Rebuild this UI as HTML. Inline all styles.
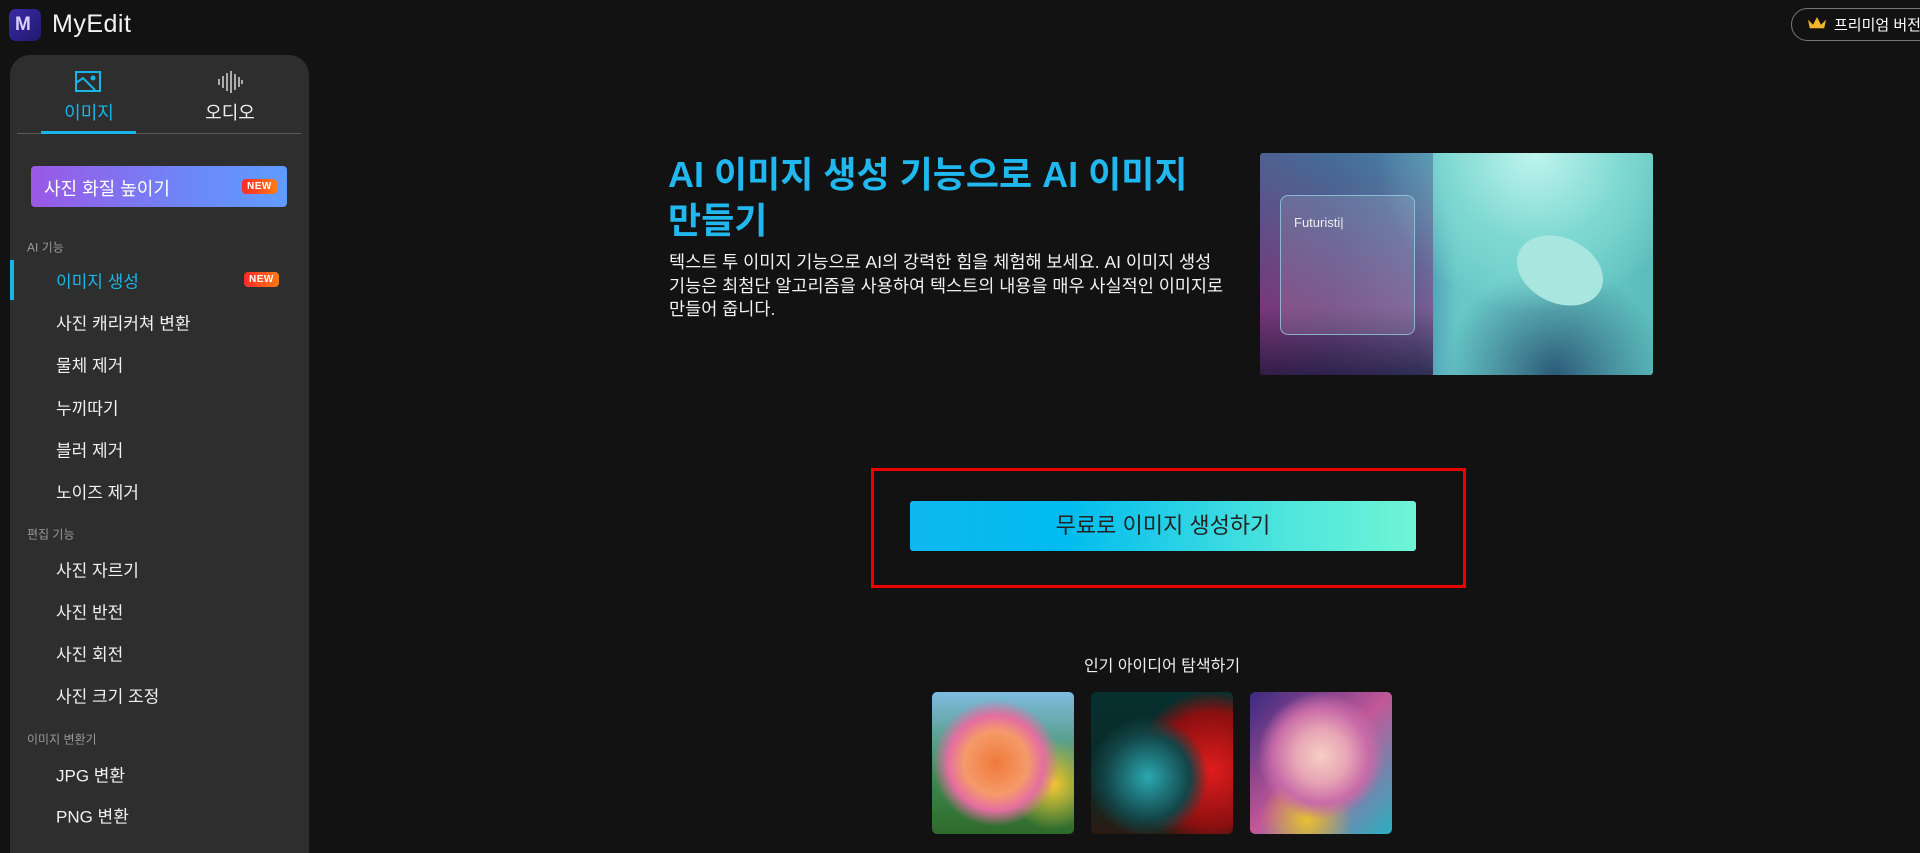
<!DOCTYPE html>
<html style="overflow:hidden;height:853px"><head><meta charset="utf-8"><style>
*{margin:0;padding:0;box-sizing:border-box}
body{width:1920px;height:853px;overflow:hidden;background:#121212;font-family:"Liberation Sans","Noto Sans CJK KR",sans-serif;color:#fff;position:relative}
.a{position:absolute}
.side{left:10px;top:55px;width:299px;height:798px;background:#2e2e2e;border-radius:20px 20px 0 0}
.mi{position:absolute;left:56px;font-size:17px;color:#f0f0f0;transform:translateY(-50%);white-space:nowrap}
.sec{position:absolute;left:27px;font-size:12px;color:#9a9a9a;transform:translateY(-50%)}
.new{position:absolute;background:linear-gradient(90deg,#ff2a2a,#ff7a14);color:#fff;font-size:10px;font-weight:bold;border-radius:4px;padding:2px 5px;letter-spacing:.5px}
.th{position:absolute;top:692px;width:142px;height:142px;border-radius:5px;overflow:hidden}
</style></head><body>
<div class="a" style="left:9px;top:9px;width:32px;height:32px;border-radius:7px;background:linear-gradient(135deg,#3b2aa8,#22186e)"></div>
<div class="a" style="left:15px;top:14px;font-size:19px;font-weight:bold;color:#d8d0ff">M</div>
<div class="a" style="left:52px;top:10px;font-size:25px;color:#f2f2f2;letter-spacing:.5px">MyEdit</div>
<div class="a" style="left:1791px;top:8px;width:160px;height:33px;border:1px solid #777;border-radius:17px"></div>
<div class="a" style="left:1808px;top:17px;width:18px;height:14px;background:#f5b52e;clip-path:polygon(0 20%,28% 55%,50% 0,72% 55%,100% 20%,90% 80%,10% 80%)"></div>
<div class="a" style="left:1834px;top:14px;font-size:15px;color:#fff;white-space:nowrap">프리미엄 버전</div>

<div class="a side"></div>
<svg class="a" style="left:75px;top:71px" width="26" height="21" viewBox="0 0 26 21"><rect x="1" y="1" width="24" height="19" fill="none" stroke="#19b5e6" stroke-width="2"/><circle cx="18" cy="7" r="2.5" fill="#19b5e6"/><path d="M1 12 L8 7 L20 19" fill="none" stroke="#19b5e6" stroke-width="2"/></svg>
<div class="a" style="left:45px;top:99px;width:88px;text-align:center;font-size:18px;color:#19b5e6">이미지</div>
<svg class="a" style="left:217px;top:71px" width="26" height="22" viewBox="0 0 26 22"><g stroke="#ccc" stroke-width="1.6"><path d="M2 8v6M6 5v12M10 2v18M14 0v22M18 3v16M22 6v10M25 9v4"/></g></svg>
<div class="a" style="left:185px;top:99px;width:90px;text-align:center;font-size:18px;color:#f0f0f0">오디오</div>
<div class="a" style="left:17px;top:133px;width:284px;height:1px;background:#5a5a5a"></div>
<div class="a" style="left:41px;top:131px;width:95px;height:3px;background:#19b5e6"></div>
<div class="a" style="left:31px;top:166px;width:256px;height:41px;border-radius:4px;background:linear-gradient(90deg,#9b58e6,#6e86f8 60%,#5f9cff)"></div>
<div class="a" style="left:44px;top:175px;font-size:18px;color:#fff">사진 화질 높이기</div>
<div class="new" style="left:242px;top:179px">NEW</div>
<div class="sec" style="top:247px">AI 기능</div>
<div class="a" style="left:10px;top:260px;width:4px;height:40px;background:#19b5e6"></div>
<div class="mi" style="top:280px;color:#19b5e6">이미지 생성</div>
<div class="new" style="left:244px;top:272px">NEW</div>
<div class="mi" style="top:322px">사진 캐리커쳐 변환</div>
<div class="mi" style="top:364px">물체 제거</div>
<div class="mi" style="top:407px">누끼따기</div>
<div class="mi" style="top:449px">블러 제거</div>
<div class="mi" style="top:491px">노이즈 제거</div>
<div class="sec" style="top:534px">편집 기능</div>
<div class="mi" style="top:569px">사진 자르기</div>
<div class="mi" style="top:611px">사진 반전</div>
<div class="mi" style="top:653px">사진 회전</div>
<div class="mi" style="top:695px">사진 크기 조정</div>
<div class="sec" style="top:739px">이미지 변환기</div>
<div class="mi" style="top:774px">JPG 변환</div>
<div class="mi" style="top:815px">PNG 변환</div>

<div class="a" style="left:668px;top:152px;width:560px;font-size:36px;font-weight:bold;line-height:46px;color:#20b8ef">AI 이미지 생성 기능으로 AI 이미지 만들기</div>
<div class="a" style="left:669px;top:251px;width:560px;font-size:17.5px;line-height:23.5px;color:#f2f2f2;word-break:break-all">텍스트 투 이미지 기능으로 AI의 강력한 힘을 체험해 보세요. AI 이미지 생성 기능은 최첨단 알고리즘을 사용하여 텍스트의 내용을 매우 사실적인 이미지로 만들어 줍니다.</div>

<div class="a" style="left:1260px;top:153px;width:393px;height:222px;border-radius:3px;overflow:hidden;background:radial-gradient(circle at 70% 0%,#bff5ee 0,#7fd9d2 25%,transparent 45%),radial-gradient(circle at 75% 100%,#2b5a78 0,transparent 30%),linear-gradient(90deg,#5b3f7a 0,#3f5a8a 18%,#4a8fb0 40%,#66c7c6 50%,#6fd0cc 70%,#5bbdbb 100%)">
<div class="a" style="left:0;top:0;width:173px;height:222px;background:linear-gradient(180deg,rgba(70,120,160,.6),rgba(140,50,120,.6) 70%,rgba(40,20,60,.8))"></div>
<div class="a" style="left:20px;top:42px;width:135px;height:140px;border:1px solid rgba(150,220,230,.7);border-radius:8px;background:rgba(255,255,255,.12)"></div>
<div class="a" style="left:34px;top:62px;font-size:13px;color:#eee">Futuristi|</div>
<div class="a" style="left:255px;top:85px;width:90px;height:65px;border-radius:50%;background:#a8e6df;transform:rotate(25deg)"></div>
</div>

<div class="a" style="left:871px;top:468px;width:595px;height:120px;border:3px solid #e00"></div>
<div class="a" style="left:910px;top:501px;width:506px;height:50px;border-radius:3px;background:linear-gradient(90deg,#0fb8ee,#00bbef 30%,#4fe6dc 75%,#6ff5d4);text-align:center;line-height:50px;font-size:22px;color:#222">무료로 이미지 생성하기</div>

<div class="a" style="left:962px;top:652px;width:400px;text-align:center;font-size:16px;color:#f0f0f0">인기 아이디어 탐색하기</div>
<div class="th" style="left:932px;background:radial-gradient(circle at 45% 50%,#f07a3a 0,#f59a6a 30%,#e56ea0 45%,transparent 60%),radial-gradient(circle at 85% 65%,#f5c830 0,transparent 30%),linear-gradient(180deg,#7fbbe0,#3c8a50 60%,#2f6a2a)"></div>
<div class="th" style="left:1091px;background:radial-gradient(circle at 40% 60%,#2aa8b0 0,#134548 35%,transparent 50%),radial-gradient(circle at 85% 55%,#e01c1c 0,#8a0f10 40%,transparent 55%),linear-gradient(180deg,#06302e,#0a2a28 60%,#2a1a12)"></div>
<div class="th" style="left:1250px;background:radial-gradient(circle at 50% 45%,#f5cfc4 0,#e7a5b5 25%,#c86ba8 45%,transparent 60%),radial-gradient(circle at 40% 90%,#e8c030 0,transparent 30%),linear-gradient(135deg,#3a2a80,#c25898 50%,#2ab0c0)"></div>
</body></html>
